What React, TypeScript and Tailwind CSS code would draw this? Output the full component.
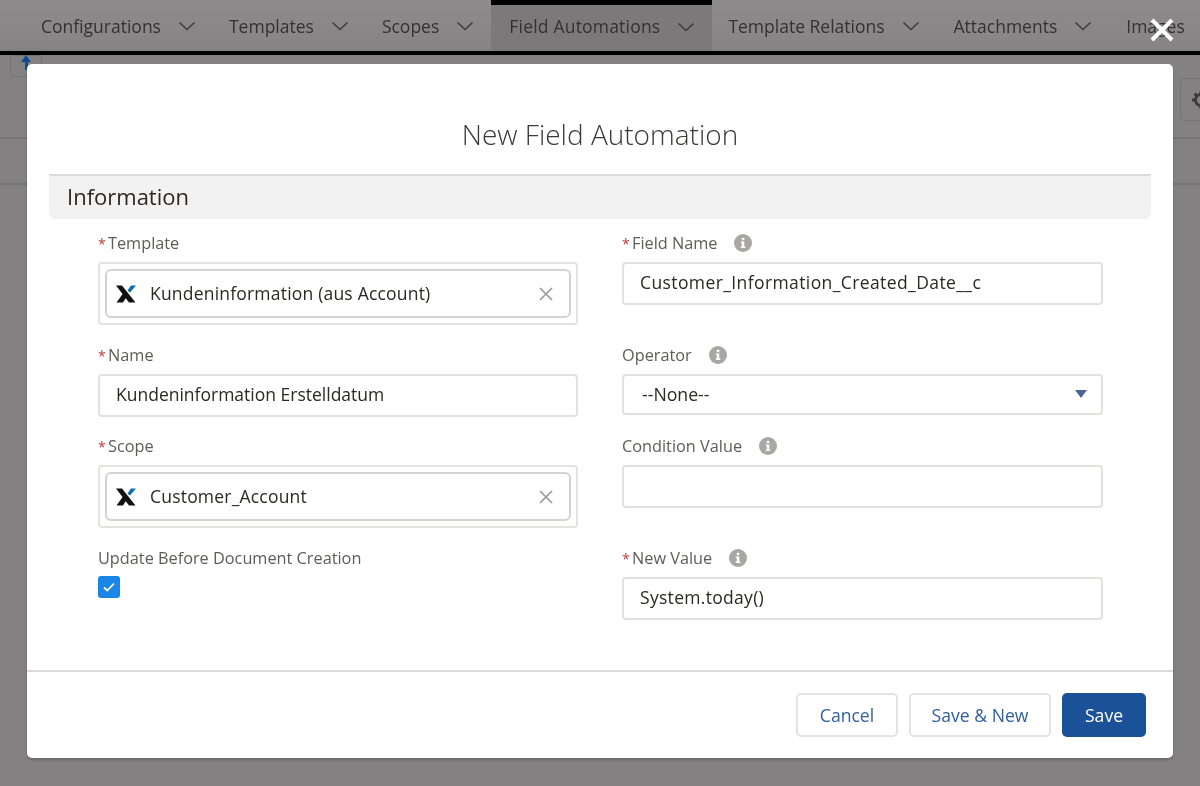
import React from "react";

const tabs = [
  { label: "Configurations", cls: "pl-[18px] pr-[15px] ml-[23px]" },
  { label: "Templates", cls: "pl-[18px] pr-[15px]" },
  { label: "Scopes", cls: "pl-[18px] pr-[17px]" },
  { label: "Field Automations", cls: "pl-[18px] pr-[17px] tracking-[0.2px] bg-[#7b7979] border-t-[5px] border-black pb-[4px]" },
  { label: "Template Relations", cls: "pl-[16px] pr-[15px]" },
  { label: "Attachments", cls: "pl-[19px] pr-[15px]" },
  { label: "Images", cls: "pl-[19px] pr-[15px]" },
];

const Chevron = () => (
  <svg width="18" height="10" viewBox="0 0 18 10" fill="none" className="ml-[17px] shrink-0">
    <path d="M1.5 1.5 L9 8.5 L16.5 1.5" stroke="#3f3e3e" strokeWidth="1.6" />
  </svg>
);

const Logo = () => (
  <svg width="22" height="20" viewBox="0 0 22 20" className="shrink-0">
    <path d="M1 1.5 H7 L20.5 18.5 H14 Z" fill="#111" />
    <path d="M1.5 18.5 L8 9.5 L11.5 13 L8 18.5 Z" fill="#111" />
    <path d="M12.5 6.5 L16 1.5 H21 L15 8.5 Z" fill="#0f6ea8" />
  </svg>
);

const Info = () => (
  <svg width="18" height="18" viewBox="0 0 18 18" className="ml-[17px] shrink-0">
    <circle cx="9" cy="9" r="9" fill="#a9a7a5" />
    <rect x="7.8" y="3.8" width="2.5" height="2.4" fill="#fff" />
    <path d="M6.8 7.6 H10.3 V12.6 H11.3 V14 H6.8 V12.6 H7.8 V9 H6.8 Z" fill="#fff" />
  </svg>
);

const Label = ({ text, required, info }: { text: string; required?: boolean; info?: boolean }) => (
  <div className="h-[28px] flex items-start text-[16.3px] leading-[19px] text-[#5e5c5a]">
    {required && <span className="text-[#c23934] text-[14px] w-[6px] mr-[4px]">*</span>}
    <span>{text}</span>
    {info && <Info />}
  </div>
);

const TextInput = ({ value, cls = "" }: { value: string; cls?: string }) => (
  <div className={`h-[43px] border-2 border-[#e2e1e0] rounded-[4px] pl-[16px] pb-[2px] flex items-center text-[17.5px] text-[#2b2826] ${cls}`}>
    {value}
  </div>
);

const Lookup = ({ value }: { value: string }) => (
  <div className="h-[63px] border-2 border-[#e4e3e2] rounded-[4px] p-[5px]">
    <div className="h-full border-2 border-[#d4d3d2] rounded-[6px] pl-[8px] pr-[15px] flex items-center text-[#2b2826]">
      <Logo />
      <span className="ml-[13px] flex-1 text-[17.5px] tracking-[0.2px]">{value}</span>
      <svg width="16" height="16" viewBox="0 0 16 16" fill="none">
        <path d="M2 2 L14 14 M14 2 L2 14" stroke="#9b9998" strokeWidth="1.7" />
      </svg>
    </div>
  </div>
);

const Button = ({ text, cls }: { text: string; cls: string }) => (
  <div className={`h-[44px] rounded-[5px] flex items-center justify-center text-[17.6px] ${cls}`}>{text}</div>
);

export default function App() {
  return (
    <div className="relative w-[1200px] h-[786px] overflow-hidden bg-[#838181] font-['Open_Sans',sans-serif] blur-[0.4px]">
      {/* top bar */}
      <div className="h-[2px] bg-[#3f5a78]" />
      <div className="h-[49px] -mt-[2px] flex bg-gradient-to-b from-[#8d8b8b] to-[#868484] text-[17.5px] text-[#333232]">
        {tabs.map((t) => (
          <div key={t.label} className={`flex items-center whitespace-nowrap h-[51px] pt-[1px] shrink-0 ${t.cls}`}>
            {t.label}
            {t.label !== "Images" && <Chevron />}
          </div>
        ))}
      </div>
      <div className="h-[4px] bg-black mt-[2px]" />

      {/* page behind the dialog */}
      <div className="h-[84px] border-b-2 border-[#767474]" />
      <div className="h-[46px] border-b-2 border-[#767474]" />

      <div className="absolute left-[10px] top-[55px] w-[32px] h-[22px] border border-[#767474] rounded-b-[4px]" />
      <svg width="14" height="16" viewBox="0 0 14 16" className="absolute left-[19px] top-[55px]">
        <path d="M7 0 L12 7 H9 V15 H6 V7 H2 Z" fill="#0b4f8f" />
      </svg>
      <div className="absolute left-[1180px] top-[78px] w-[40px] h-[43px] border border-[#767474] rounded-[4px] flex items-center pl-[11px]">
        <svg width="18" height="18" viewBox="0 0 18 18">
          <circle cx="9" cy="9" r="5.5" fill="none" stroke="#3b3a3a" strokeWidth="3" />
          <path d="M9 0 V4 M9 14 V18 M0 9 H4 M14 9 H18 M2.6 2.6 L5 5 M13 13 L15.4 15.4" stroke="#3b3a3a" strokeWidth="3" />
        </svg>
      </div>

      {/* close */}
      <svg width="26" height="26" viewBox="0 0 26 26" className="absolute left-[1149px] top-[18px]">
        <path d="M3 2 L23 22 M23 2 L3 22" stroke="#fff" strokeWidth="4" />
      </svg>

      {/* dialog */}
      <div className="absolute left-[27px] top-[64px] w-[1146px] h-[694px] bg-white rounded-[5px] flex flex-col shadow-[0_2px_3px_rgba(0,0,0,0.2)]">
        <div className="h-[110px] shrink-0 flex items-center justify-center pt-[30px] text-[28px] font-light text-[#3b3a39]">
          New Field Automation
        </div>
        <div className="mx-[22px] h-[45px] shrink-0 border-t-2 border-[#dddbda] bg-[#f3f2f2] rounded-b-[6px] pl-[18px] pb-[2px] flex items-center text-[22px] text-[#2b2826]">
          Information
        </div>
        <div className="flex-1 pt-[15px] px-[71px] grid grid-cols-[480px_481px] gap-x-[44px] content-start">
          <div className="h-[112px]">
            <Label text="Template" required />
            <Lookup value="Kundeninformation (aus Account)" />
          </div>
          <div className="h-[112px]">
            <Label text="Field Name" required info />
            <TextInput value="Customer_Information_Created_Date__c" cls="tracking-[0.4px]" />
          </div>
          <div className="h-[91px]">
            <Label text="Name" required />
            <TextInput value="Kundeninformation Erstelldatum" />
          </div>
          <div className="h-[91px]">
            <Label text="Operator" info />
            <div className="h-[41px] border-2 border-[#e2e1e0] rounded-[4px] pl-[18px] pr-[14px] pb-[1px] flex items-center justify-between text-[17.7px] text-[#2b2826]">
              --None--
              <svg width="12" height="8" viewBox="0 0 12 8">
                <path d="M0 0 H12 L6 8 Z" fill="#4a6496" />
              </svg>
            </div>
          </div>
          <div className="h-[112px]">
            <Label text="Scope" required />
            <Lookup value="Customer_Account" />
          </div>
          <div className="h-[112px]">
            <Label text="Condition Value" info />
            <TextInput value="" />
          </div>
          <div>
            <Label text="Update Before Document Creation" />
            <div className="w-[22px] h-[22px] -mt-[1px] rounded-[3px] bg-[#1b86e8] flex items-center justify-center">
              <svg width="12" height="10" viewBox="0 0 12 10" fill="none">
                <path d="M1 5.5 L4.3 8.5 L11 1.5" stroke="#fff" strokeWidth="1.8" />
              </svg>
            </div>
          </div>
          <div>
            <Label text="New Value" required info />
            <TextInput value="System.today()" cls="tracking-[0.3px]" />
          </div>
        </div>
        <div className="h-[88px] shrink-0 border-t-2 border-[#dddbda] flex items-start justify-end pt-[21px] pr-[27px] gap-[11px]">
          <Button text="Cancel" cls="w-[102px] border-2 border-[#e4e3e2] text-[#2f5f9e]" />
          <Button text="Save & New" cls="w-[142px] border-2 border-[#e4e3e2] text-[#2f5f9e]" />
          <Button text="Save" cls="w-[84px] bg-[#1b5297] text-white" />
        </div>
      </div>
    </div>
  );
}
